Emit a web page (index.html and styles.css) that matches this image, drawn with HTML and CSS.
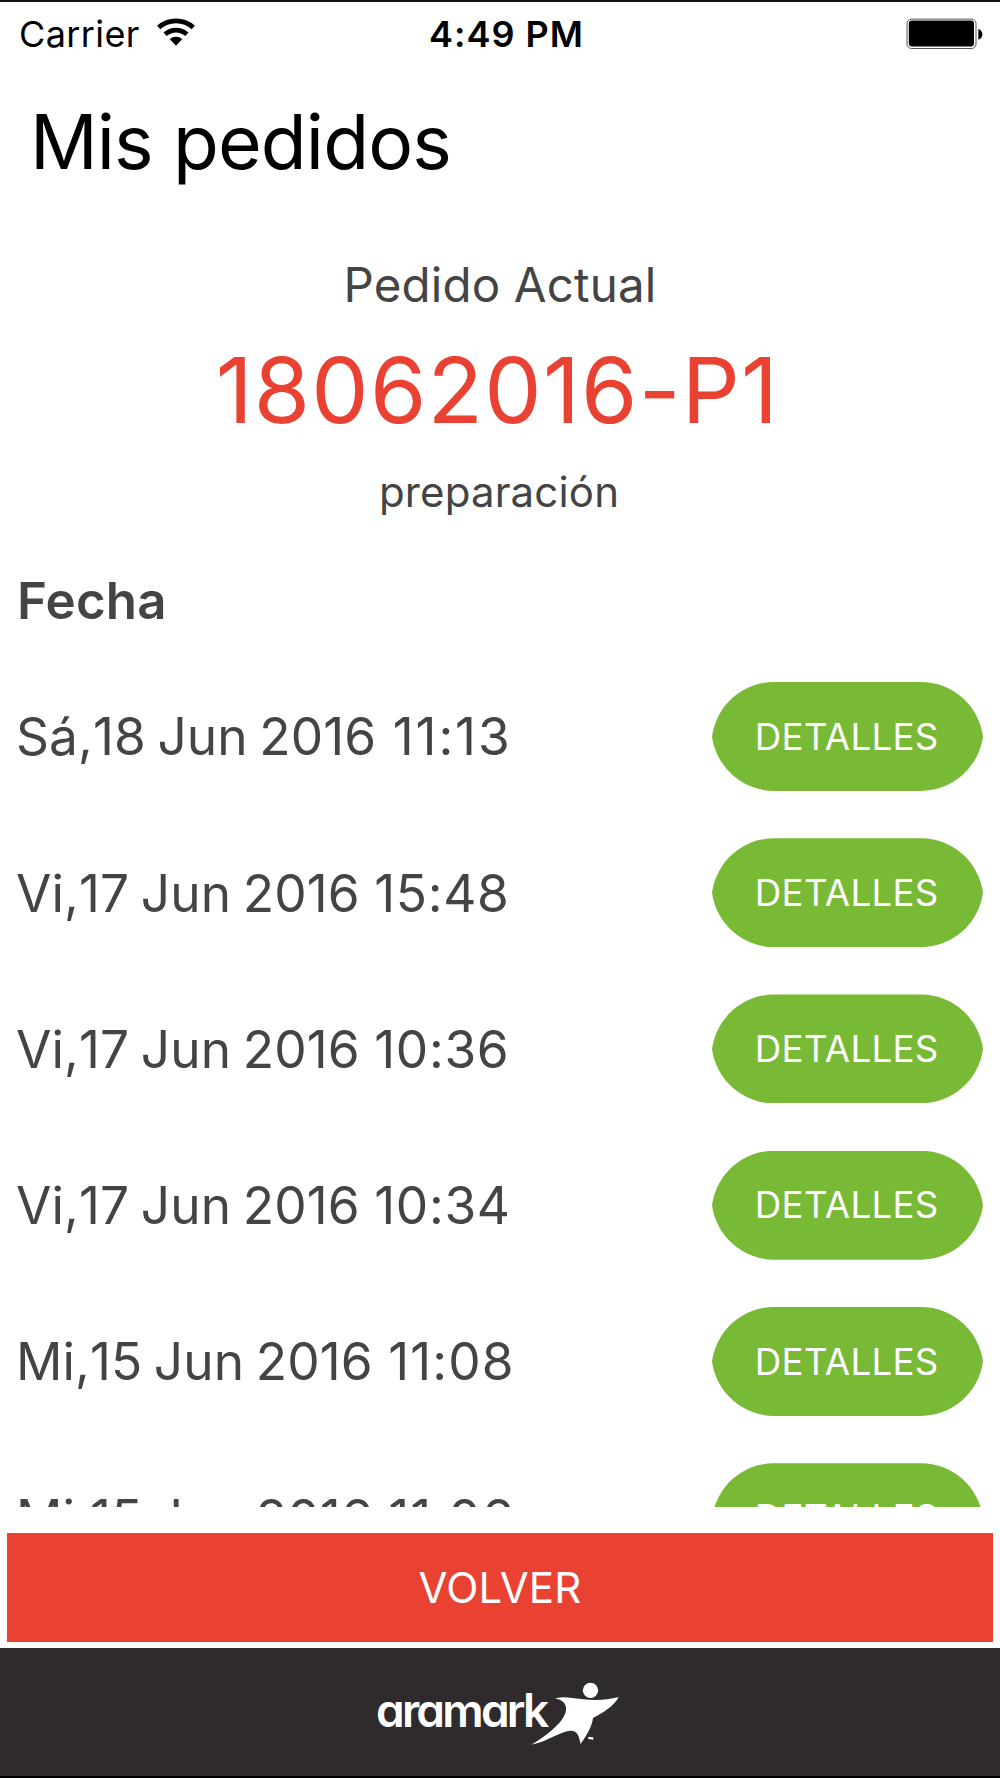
FILE: index.html
```html
<!DOCTYPE html>
<html lang="es">
<head>
<meta charset="utf-8">
<title>Mis pedidos</title>
<link rel="stylesheet" href="styles.css">
</head>
<body>
<div class="screen">
  <header class="status-bar">
    <div class="status-left">
      <span class="carrier">Carrier</span>
      <svg class="wifi" viewBox="0 0 40 30" width="40" height="30">
        <path d="M1.1 8.8a27.8 27.8 0 0 1 37.8 0l-3.2 3.5a23.1 23.1 0 0 0-31.4 0z"/>
        <path d="M7.5 15.6a18.3 18.3 0 0 1 25 0l-3.3 3.4a13.6 13.6 0 0 0-18.4 0z"/>
        <path d="M13.8 22.2a9 9 0 0 1 12.4 0l-6.2 6.5z"/>
      </svg>
    </div>
    <span class="clock">4:49 PM</span>
    <svg class="battery" viewBox="0 0 78 32" width="78" height="32">
      <rect class="battery-case" x="1" y="1.1" width="69" height="29.4" rx="4.5"/>
      <rect x="2.8" y="2.4" width="65.2" height="26" rx="3"/>
      <path d="M72.3 11c5.4 1 5.4 9.600 0 10.600z"/>
    </svg>
  </header>

  <h1 class="title">Mis pedidos</h1>

  <section class="current-order">
    <p class="order-label">Pedido Actual</p>
    <p class="order-number">18062016-P1</p>
    <p class="order-status">preparación</p>
  </section>

  <main class="orders">
    <h2 class="orders-heading">Fecha</h2>
    <ul class="order-list">
      <li class="order-row"><span class="date">Sá,18 Jun 2016 <span class="time time-narrow-digits">11:13</span></span><button class="details">DETALLES</button></li>
      <li class="order-row"><span class="date">Vi,17 Jun 2016 <span class="time">15:48</span></span><button class="details">DETALLES</button></li>
      <li class="order-row"><span class="date">Vi,17 Jun 2016 <span class="time">10:36</span></span><button class="details">DETALLES</button></li>
      <li class="order-row"><span class="date">Vi,17 Jun 2016 <span class="time">10:34</span></span><button class="details">DETALLES</button></li>
      <li class="order-row"><span class="date">Mi,15 Jun 2016 <span class="time time-eleven">11:08</span></span><button class="details">DETALLES</button></li>
      <li class="order-row"><span class="date">Mi,15 Jun 2016 <span class="time time-eleven">11:06</span></span><button class="details">DETALLES</button></li>
    </ul>
  </main>

  <button class="back">VOLVER</button>

  <footer class="brand-bar">
    <span class="brand">aramark</span>
    <svg class="brand-figure" viewBox="514 66 264 190" width="88" height="63.300">
      <circle cx="692.500" cy="91" r="23"/>
      <path d="M586 115C612 108 636 114 664 117C704 122 741 121 777 111C764 137 730 159 700 174C697 201 681 225 663 252C658 231 656 215 636 212C604 211 571 242 515 254C547 236 585 207 606 180C626 153 627 124 586 115Z"/>
      <path d="M685 231L701 232L701 239L686 237Z"/>
    </svg>
  </footer>
</div>
</body>
</html>
```
FILE: styles.css
```css
* { box-sizing: border-box; }

body {
  margin: 0;
  background: #fff;
  font-family: Inter, "Liberation Sans", sans-serif;
  color: #444;
}

h1, h2, p, ul {
  margin: 0;
  padding: 0;
  font-weight: 400;
}

ul { list-style: none; }

button {
  padding: 0;
  border: 0;
  color: #fff;
  font-family: inherit;
}

.screen {
  display: flex;
  flex-direction: column;
  width: 1000px;
  height: 1778px;
  overflow: hidden;
  border-top: 2px solid #111;
  border-bottom: 2px solid #000;
}

.status-bar {
  display: grid;
  grid-template-columns: 1fr auto 1fr;
  align-items: center;
  height: 64px;
  padding: 0 16px 0 19px;
  color: #000;
  line-height: 64px;
}

.status-left {
  display: flex;
  align-items: center;
  gap: 15px;
}

.carrier { width: 121.700px; font-size: 36px; font-weight: 400; letter-spacing: 0.4px; }
.wifi { margin-bottom: 4px; }
.clock { margin-left: 10px; font-size: 36px; font-weight: 600; letter-spacing: 1px; }
.battery { justify-self: end; }

.battery-case {
  fill: none;
  stroke: #555;
  stroke-width: 1;
}

.title {
  height: 152px;
  padding-left: 30px;
  color: #000;
  font-size: 75px;
  letter-spacing: -0.9px;
  line-height: 152px;
}

.current-order {
  height: 340px;
  text-align: center;
}

.order-label { height: 134px; font-size: 47.5px; letter-spacing: 0.15px; line-height: 134px; }
.order-number { height: 76px; padding-right: 5px; color: #e94233; font-size: 91px; letter-spacing: 1.2px; line-height: 76px; }
.order-status { height: 130px; padding-right: 2px; font-size: 42px; letter-spacing: 0.15px; line-height: 128px; }

.orders {
  height: 949px;
  padding: 0 17px 0 16px;
  overflow: hidden;
}

.orders-heading {
  height: 100.300px;
  padding-left: 1px;
  font-size: 51px;
  font-weight: 600;
  letter-spacing: 0.2px;
  line-height: 85px;
}

.order-row {
  display: flex;
  align-items: center;
  justify-content: space-between;
  height: 156.250px;
}

.date {
  font-size: 51.400px;
  font-kerning: none;
  letter-spacing: 0.1px;
  word-spacing: -3px;
}

.time { margin-left: 3px; letter-spacing: 0.7px; }
.time-eleven { margin-left: 4px; letter-spacing: 1.1px; }
.time-narrow-digits { margin-left: 5px; letter-spacing: 1.9px; }

.details {
  width: 271px;
  height: 109px;
  padding-right: 1.500px;
  background: #78b935;
  clip-path: path("M0 54.500A63 63 0 0 1 62 0H209A63 63 0 0 1 271 54.500A63 63 0 0 1 209 109H62A63 63 0 0 1 0 54.500Z");
  font-size: 36.700px;
  letter-spacing: 0.3px;
  line-height: 107.500px;
}

.back {
  flex: none;
  height: 108.500px;
  margin: 26px 6.700px 0;
  background: #e94233;
  font-size: 42px;
  letter-spacing: 0.2px;
}

.brand-bar {
  display: flex;
  flex: 1;
  align-items: flex-start;
  margin-top: 6.700px;
  padding: 34px 0 0 376px;
  background: #2f2a2b;
  color: #fff;
}

.brand {
  width: 155.300px;
  font-size: 46px;
  font-weight: 600;
  letter-spacing: -2.800px;
  line-height: 56px;
  white-space: nowrap;
  font-feature-settings: "cv11";
}

.brand-figure { flex: none; fill: #fff; }
```
